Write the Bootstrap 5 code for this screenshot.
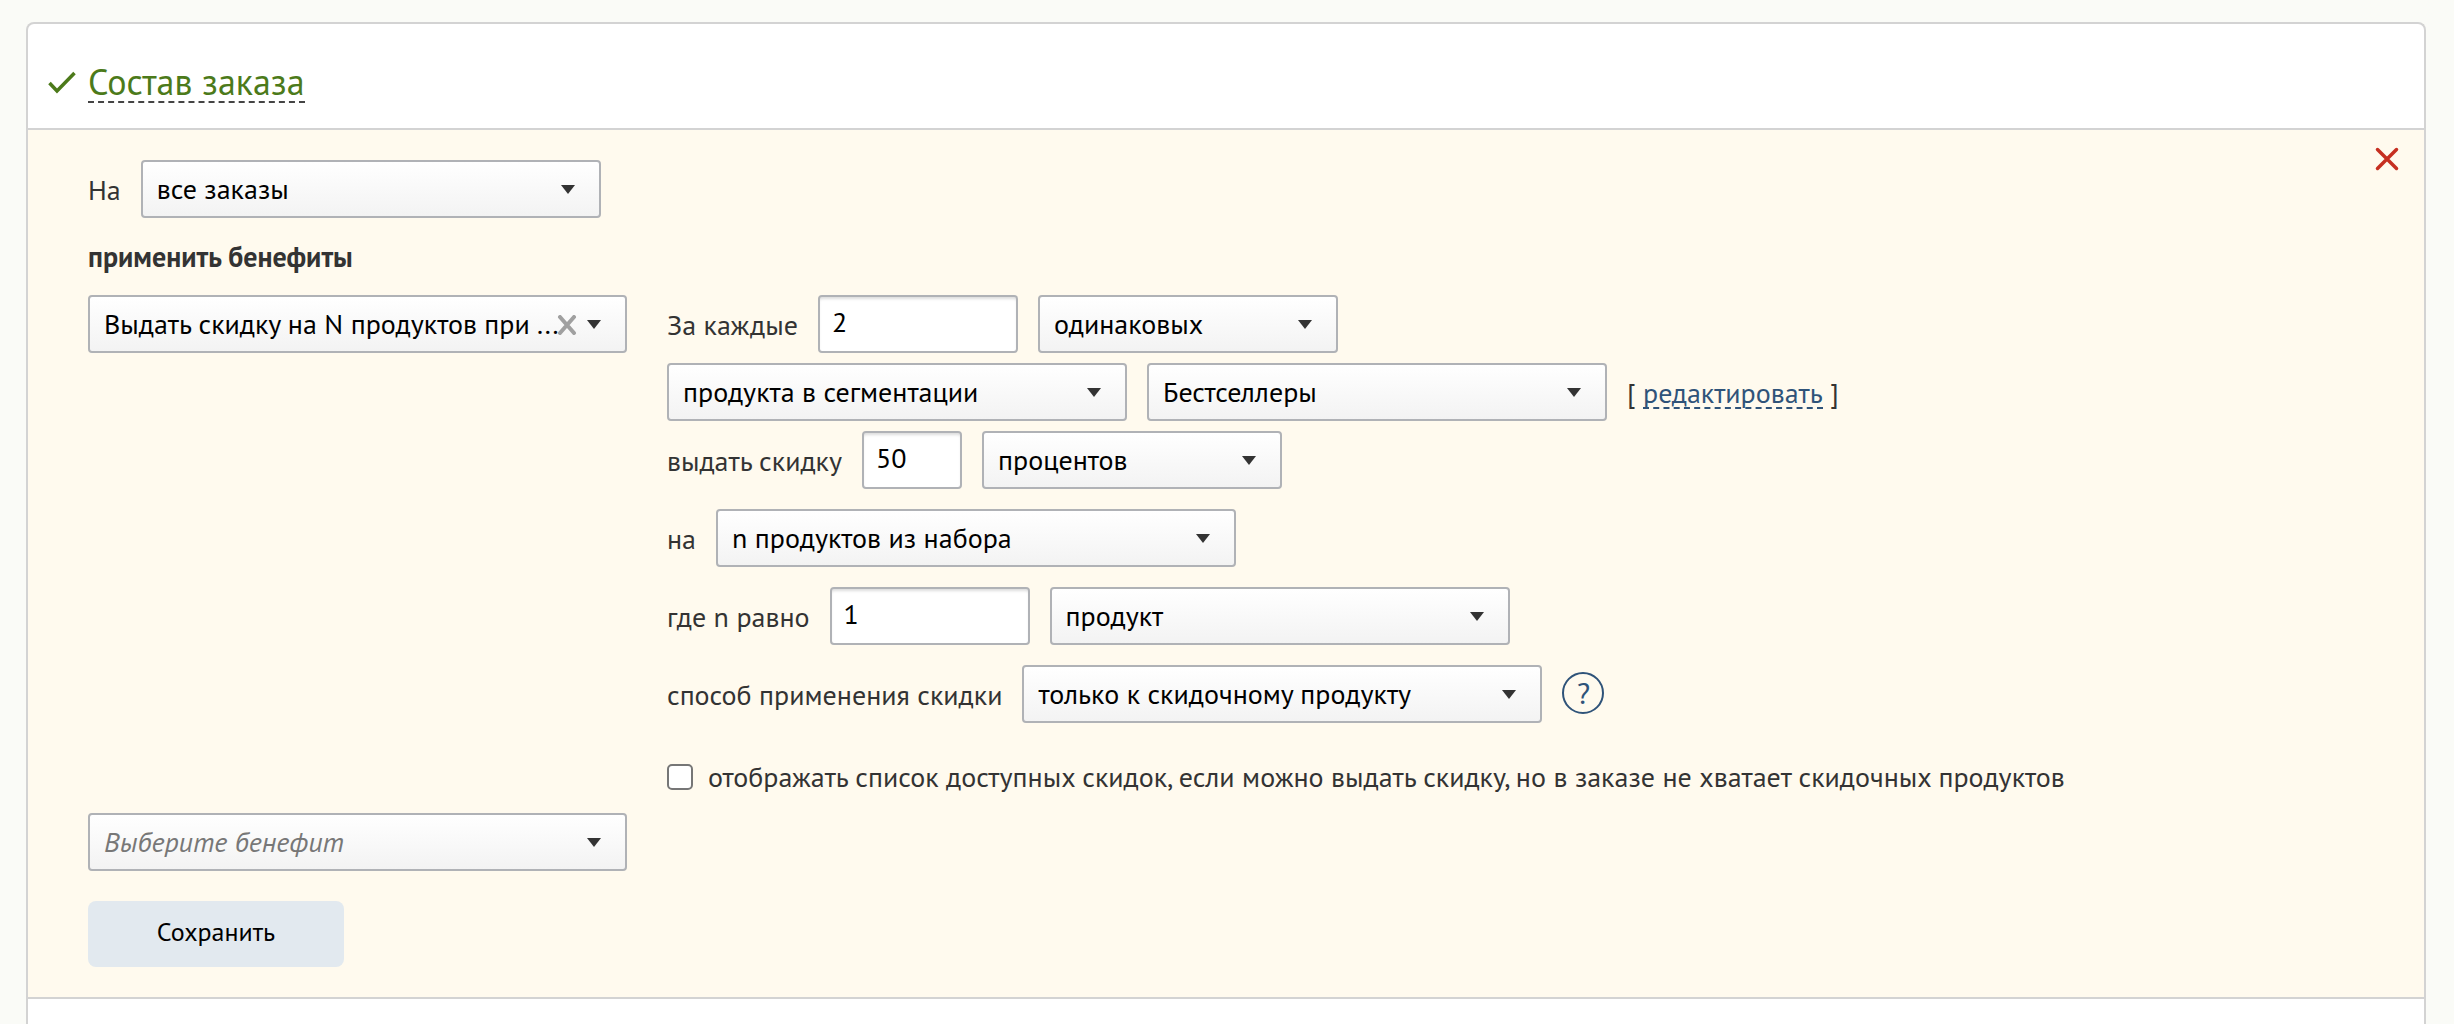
<!DOCTYPE html>
<html lang="ru">
<head>
<meta charset="utf-8">
<meta name="viewport" content="width=device-width, initial-scale=1">
<title>Состав заказа</title>
<link href="https://cdn.jsdelivr.net/npm/bootstrap@5.3.0/dist/css/bootstrap.min.css" rel="stylesheet">
<style>
  body {
    font-family: "PT Sans", "Noto Sans", sans-serif;
    font-size: 28px;
    line-height: 36px;
    color: #333;
    background: #fafbf7;
    overflow-x: hidden;
  }
  .panel {
    margin: 22px 28px 0 26px;
    background: #fff;
    border: 2px solid #d3d3d3;
    border-radius: 8px 8px 0 0;
    min-height: calc(100vh - 22px);
    border-bottom: 0;
  }
  .panel-head {
    height: 104px;
    padding: 14px 20px 0;
    gap: 12px;
  }
  .panel-head h2 { font-size: 36px; line-height: 38px; font-weight: 400; }
  .panel-head a {
    display: block;
    color: #4c7a1a;
    border-bottom: 2px dashed #444;
  }
  .check-icon { width: 28px; height: 24px; }
  .rule-body {
    background: #fffaee;
    border-top: 2px solid #d3d3d3;
    border-bottom: 2px solid #d3d3d3;
    padding: 30px 60px;
  }
  .close-btn { top: 14px; right: 22px; width: 30px; height: 30px; line-height: 0; }
  .section-name { line-height: 36px; margin: 21px 0 20px; }
  .row-line { gap: 20px; }
  .row-line > label, .row-line > span { padding-top: 2px; }
  .benefit-cols { gap: 40px; margin-bottom: 18px; }
  .tight { gap: 10px; }
  .loose { gap: 20px; }
  .ctl.form-select, .ctl.form-control {
    height: 58px;
    font-size: 28px;
    line-height: 36px;
    color: #000;
    border: 2px solid #b0b2b6;
    border-radius: 4px;
    padding: 9px 14px;
  }
  .ctl.form-control {
    padding: 6px 12px 12px;
    background: #fff;
    box-shadow: inset 0 3px 3px -1px #ddd;
  }
  .ctl.form-select {
    padding-right: 60px;
    background-color: #f9f9f9;
    background-image: url("data:image/svg+xml,%3Csvg xmlns='http://www.w3.org/2000/svg' viewBox='0 0 14 9'%3E%3Cpath fill='%23333' d='M0 0h14L7 9z'/%3E%3C/svg%3E"), linear-gradient(#fff, #f3f3f3);
    background-size: 14px 9px, 100% 100%;
    background-position: right 24px center, 0 0;
    background-repeat: no-repeat;
  }
  .w-xs { width: 100px; }
  .w-sm { width: 200px; }
  .w-md { width: 300px; }
  .w-lg { width: 460px; }
  .w-xl { width: 520px; }
  .w-benefit { width: 539px; }
  .w-benefit .ctl.form-select { padding-right: 64px; }
  .clear-btn { right: 50px; top: 20px; width: 20px; height: 20px; line-height: 0; }
  .ctl.unset { font-style: italic; color: #777; }
  .edit-link { color: #2f5379; border-bottom: 2px dashed #2f5379; display: inline-block; line-height: 28px; }
  .help-btn.btn {
    width: 42px;
    height: 42px;
    margin-bottom: 2px;
    border: 2px solid #2f5379;
    color: #2f5379;
    font-size: 30px;
    line-height: 36px;
  }
  .opt-line { gap: 15px; }
  .opt-line .form-check-input {
    width: 26px; height: 26px; margin: 0;
    border: 2px solid #767676; border-radius: 5px; background-color: #fff;
  }
  .save-btn {
    margin-top: 30px;
    width: 256px;
    height: 66px;
    padding: 4px 12px 8px;
    font-size: 26px;
    line-height: 36px;
    color: #000;
    background: #e2e9ef;
    border: 0;
    border-radius: 8px;
  }
</style>
<script src="https://cdn.jsdelivr.net/npm/bootstrap@5.3.0/dist/js/bootstrap.bundle.min.js"></script>
</head>
<body>
<main class="panel">
  <header class="panel-head d-flex align-items-center">
    <svg class="check-icon" viewBox="0 0 28 24" fill="none" stroke="#4c7a1a" stroke-width="3.500"><path d="M1.500 12 9 20 26.500 2"/></svg>
    <h2 class="m-0"><a href="#order" class="text-decoration-none">Состав заказа</a></h2>
  </header>

  <form class="rule-body position-relative">
    <button type="button" class="close-btn btn p-0 border-0 position-absolute" aria-label="Удалить">
      <svg width="30" height="30" viewBox="0 0 30 30" stroke="#c62f21" stroke-width="3.500" stroke-linecap="round"><path d="M5.500 5.500l19 19M24.500 5.500l-19 19"/></svg>
    </button>

    <div class="row-line d-flex align-items-center">
      <label for="orders">На</label>
      <select id="orders" class="ctl form-select w-lg"><option>все заказы</option></select>
    </div>

    <p class="section-name fw-bold">применить бенефиты</p>

    <div class="benefit-cols d-flex align-items-start">
      <div class="w-benefit flex-shrink-0 position-relative">
        <select class="ctl form-select" aria-label="Бенефит"><option>Выдать скидку на N продуктов при ...</option></select>
        <button type="button" class="clear-btn btn p-0 border-0 position-absolute" aria-label="Очистить">
          <svg width="20" height="20" viewBox="0 0 20 20" stroke="#a0a0a0" stroke-width="4" stroke-linecap="round"><path d="M3 2l14 16M17 2L3 18"/></svg>
        </button>
      </div>

      <div class="d-flex flex-column loose">
        <div class="d-flex flex-column tight">
          <div class="row-line d-flex align-items-center">
            <label for="every">За каждые</label>
            <input id="every" type="text" class="ctl form-control w-sm" value="2">
            <select class="ctl form-select w-md" aria-label="Вид продуктов"><option>одинаковых</option></select>
          </div>
          <div class="row-line d-flex align-items-center">
            <select class="ctl form-select w-lg" aria-label="Продукты"><option>продукта в сегментации</option></select>
            <select class="ctl form-select w-lg" aria-label="Сегмент"><option>Бестселлеры</option></select>
            <span>[ <a href="#edit" class="edit-link text-decoration-none">редактировать</a> ]</span>
          </div>
          <div class="row-line d-flex align-items-center">
            <label for="amount">выдать скидку</label>
            <input id="amount" type="text" class="ctl form-control w-xs" value="50">
            <select class="ctl form-select w-md" aria-label="Единица скидки"><option>процентов</option></select>
          </div>
        </div>
        <div class="row-line d-flex align-items-center">
          <label for="target">на</label>
          <select id="target" class="ctl form-select w-xl"><option>n продуктов из набора</option></select>
        </div>
        <div class="row-line d-flex align-items-center">
          <label for="count">где n равно</label>
          <input id="count" type="text" class="ctl form-control w-sm" value="1">
          <select class="ctl form-select w-lg" aria-label="Единица"><option>продукт</option></select>
        </div>
        <div class="row-line d-flex align-items-center">
          <label for="method">способ применения скидки</label>
          <select id="method" class="ctl form-select w-xl"><option>только к скидочному продукту</option></select>
          <button type="button" class="help-btn btn p-0 rounded-circle" aria-label="Справка">?</button>
        </div>
        <div class="opt-line d-flex align-items-center mt-3">
          <input id="show" type="checkbox" class="form-check-input">
          <label for="show">отображать список доступных скидок, если можно выдать скидку, но в заказе не хватает скидочных продуктов</label>
        </div>
      </div>
    </div>

    <div class="w-benefit">
      <select class="ctl unset form-select" aria-label="Новый бенефит"><option>Выберите бенефит</option></select>
    </div>
    <button type="submit" class="save-btn btn">Сохранить</button>
  </form>
</main>
</body>
</html>
